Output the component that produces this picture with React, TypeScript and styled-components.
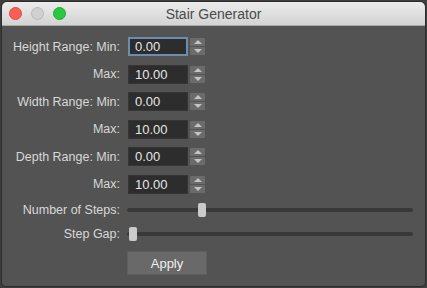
import React from "react";
import styled, { createGlobalStyle } from "styled-components";

const GlobalStyle = createGlobalStyle`
  html, body {
    margin: 0;
    padding: 0;
    background: #3e3e3e;
    width: 427px;
    height: 288px;
    overflow: hidden;
  }
`;

type FieldRowData = {
  label: string;
  value: string;
  focused?: boolean;
};

const fieldRows: FieldRowData[] = [
  { label: "Height Range: Min:", value: "0.00", focused: true },
  { label: "Max:", value: "10.00" },
  { label: "Width Range: Min:", value: "0.00" },
  { label: "Max:", value: "10.00" },
  { label: "Depth Range: Min:", value: "0.00" },
  { label: "Max:", value: "10.00" },
];

const sliderRows = [
  { label: "Number of Steps:", value: 0.255 },
  { label: "Step Gap:", value: 0.008 },
];

const Arrow: React.FC<{ up?: boolean }> = ({ up }) => (
  <svg width="8" height="4" viewBox="0 0 8 4">
    <polygon points={up ? "4,0 8,4 0,4" : "0,0 8,0 4,4"} fill="#c4c4c4" />
  </svg>
);

const App: React.FC = () => {
  return (
    <>
      <GlobalStyle />
      <Window>
        <TitleBar>
          <Lights>
            <Light color="#fc5f57" border="#de4640" />
            <Light color="#d0d0d0" border="#b8b8b8" />
            <Light color="#2ac83f" border="#1eaa30" />
          </Lights>
          <Title>Stair Generator</Title>
        </TitleBar>
        <Body>
          {fieldRows.map((row, i) => (
            <FieldRow key={i}>
              <Label>{row.label}</Label>
              <Control>
                <Field focused={row.focused}>{row.value}</Field>
                <Spinner>
                  <SpinButton>
                    <Arrow up />
                  </SpinButton>
                  <SpinButton>
                    <Arrow />
                  </SpinButton>
                </Spinner>
              </Control>
            </FieldRow>
          ))}
          {sliderRows.map((row, i) => (
            <SliderRow key={i}>
              <Label>{row.label}</Label>
              <Track>
                <Thumb style={{ left: `calc(${row.value * 100}% - ${row.value * 8}px)` }} />
              </Track>
            </SliderRow>
          ))}
          <ButtonRow>
            <span />
            <ApplyButton>Apply</ApplyButton>
          </ButtonRow>
        </Body>
      </Window>
    </>
  );
};

const Window = styled.div`
  margin: 2px 2px 0 2px;
  height: 284px;
  display: flex;
  flex-direction: column;
  background: #535353;
  border-radius: 5px 5px 4px 4px;
  overflow: hidden;
  box-shadow: 0 0 0 1px #2c2c2c;
`;

const TitleBar = styled.div`
  position: relative;
  height: 23px;
  flex-shrink: 0;
  display: flex;
  align-items: center;
  justify-content: center;
  background: linear-gradient(#ececec, #d3d3d3);
  border-bottom: 1px solid #a9a9a9;
`;

const Lights = styled.div`
  position: absolute;
  left: 7px;
  top: 5px;
  display: flex;
  gap: 9px;
`;

const Light = styled.span<{ color: string; border: string }>`
  width: 13px;
  height: 13px;
  border-radius: 50%;
  box-sizing: border-box;
  background: ${(p) => p.color};
  border: 0.5px solid ${(p) => p.border};
`;

const Title = styled.div`
  font-family: "Liberation Sans", Arial, sans-serif;
  font-size: 14px;
  color: #4a4a4a;
  margin-top: 1px;
`;

const Body = styled.div`
  padding-top: 7px;
  padding-right: 12px;
  display: flex;
  flex-direction: column;
  font-family: "Liberation Sans", Arial, sans-serif;
`;

const FieldRow = styled.div`
  height: 27.5px;
  display: grid;
  grid-template-columns: 118px 1fr;
  column-gap: 8px;
  align-items: center;
`;

const SliderRow = styled(FieldRow)`
  height: 24px;
`;

const ButtonRow = styled(FieldRow)`
  height: 24px;
  margin-top: 5px;
`;

const Label = styled.div`
  text-align: right;
  font-size: 12.5px;
  color: #d8d8d8;
  white-space: nowrap;
`;

const Control = styled.div`
  display: flex;
  align-items: center;
  gap: 2px;
`;

const Field = styled.div<{ focused?: boolean }>`
  width: 60px;
  height: 19px;
  box-sizing: border-box;
  background: #2d2d2d;
  border: ${(p) => (p.focused ? "2px solid #6a8db0" : "1px solid #353535")};
  padding-left: ${(p) => (p.focused ? "5px" : "6px")};
  display: flex;
  align-items: center;
  font-size: 13px;
  color: #e6e6e6;
`;

const Spinner = styled.div`
  display: flex;
  flex-direction: column;
  gap: 1px;
`;

const SpinButton = styled.div`
  width: 15px;
  height: 8px;
  background: #6b6b6b;
  border-radius: 1px;
  display: flex;
  align-items: center;
  justify-content: center;
`;

const Track = styled.div`
  position: relative;
  height: 4px;
  border-radius: 2px;
  background: #393939;
  margin-left: -1px;
`;

const Thumb = styled.div`
  position: absolute;
  top: -5px;
  width: 8px;
  height: 14px;
  border-radius: 2px;
  background: #cacaca;
`;

const ApplyButton = styled.div`
  width: 80px;
  height: 24px;
  margin-left: -1px;
  box-sizing: border-box;
  background: #696969;
  border: 1px solid #5e5e5e;
  display: flex;
  align-items: center;
  justify-content: center;
  font-size: 13px;
  color: #f0f0f0;
`;

export default App;
